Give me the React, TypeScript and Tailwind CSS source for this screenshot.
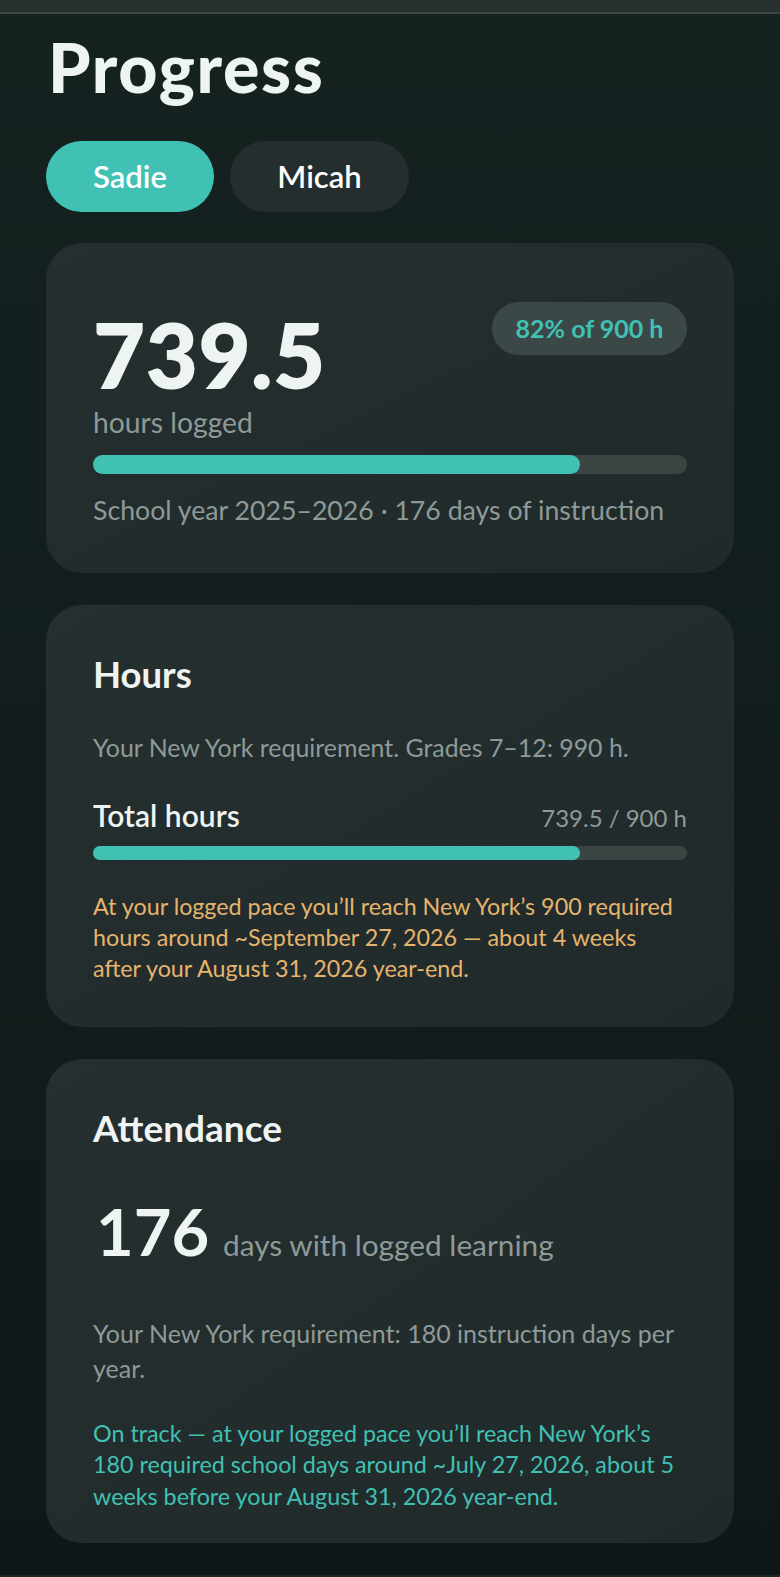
import React from "react";

function Bar({ pct, h }: { pct: number; h: string }) {
  return (
    <div className={`w-full rounded-full bg-[#3a4543] ${h}`}>
      <div className={`rounded-full bg-[#40c1b4] ${h}`} style={{ width: `${pct}%` }} />
    </div>
  );
}

export default function App() {
  return (
    <div
      className="min-h-[1577px] w-full bg-gradient-to-b from-[#152220] to-[#0e1818] text-[#eef4f2]"
      style={{ fontFamily: 'Lato, "Open Sans", sans-serif' }}
    >
      <div className="h-[14px] bg-[#27312f] border-b-2 border-[#3c4845]" />
      <main className="px-[46px]">
        <h1 className="mt-[21px] pl-[2px] text-[68px] leading-[64px] font-black tracking-[1.6px]">Progress</h1>
        <div className="mt-[42px] flex gap-[16px]">
          <button className="flex h-[71px] w-[168px] items-center justify-center rounded-full bg-[#40c1b4] text-[31px] font-semibold text-white">
            Sadie
          </button>
          <button className="flex h-[71px] w-[179px] items-center justify-center rounded-full bg-[#242e2e] text-[31px] font-semibold text-white">
            Micah
          </button>
        </div>

        <section className="mt-[31px] h-[330px] rounded-[36px] bg-gradient-to-br from-[#252f2f] to-[#212a2a] px-[47px] pt-[59px]">
          <div className="flex items-start justify-between">
            <div className="mt-[6px] text-[90px] leading-[92px] font-extrabold tracking-[0.5px]">739.5</div>
            <div className="flex h-[53px] w-[195px] items-center justify-center rounded-full bg-[#3c4847] text-[25px] font-bold text-[#40c1b4]">
              82% of 900 h
            </div>
          </div>
          <div className="mt-[5px] text-[28.3px] leading-[34px] text-[#8e9a98]">hours logged</div>
          <div className="mt-[16px]">
            <Bar pct={82} h="h-[19px]" />
          </div>
          <div className="mt-[19px] whitespace-nowrap text-[26.7px] leading-[34px] text-[#8e9a98]">
            School year 2025–2026 · 176 days of instruction
          </div>
        </section>

        <section className="mt-[32px] h-[422px] rounded-[36px] bg-gradient-to-br from-[#252f2f] to-[#212a2a] px-[47px] pt-[49px]">
          <h2 className="text-[36.5px] leading-[40px] font-bold">Hours</h2>
          <p className="mt-[37px] text-[24.9px] leading-[32px] text-[#8e9a98]">
            Your New York requirement. Grades 7–12: 990 h.
          </p>
          <div className="mt-[34px] flex items-baseline justify-between">
            <span className="text-[30px] leading-[36px] font-semibold">Total hours</span>
            <span className="text-[24px] leading-[36px] text-[#8e9a98]">739.5 / 900 h</span>
          </div>
          <div className="mt-[10px]">
            <Bar pct={82} h="h-[14px]" />
          </div>
          <p className="mt-[31px] text-[23.3px] leading-[31px] text-[#e6b46c]">
            At your logged pace you’ll reach New York’s 900 required hours around ~September 27, 2026 — about 4 weeks after your August 31, 2026 year-end.
          </p>
        </section>

        <section className="mt-[32px] h-[484px] rounded-[36px] bg-gradient-to-br from-[#252f2f] to-[#212a2a] px-[47px] pt-[49px]">
          <h2 className="text-[37px] leading-[40px] font-bold">Attendance</h2>
          <div className="mt-[47px] flex items-baseline gap-[14px] pl-[3px]">
            <span className="text-[65px] leading-[72px] font-bold">176</span>
            <span className="text-[29.8px] leading-[72px] text-[#8e9a98]">days with logged learning</span>
          </div>
          <p className="mt-[35px] text-[25px] leading-[35px] text-[#8e9a98]">
            Your New York requirement: 180 instruction days per year.
          </p>
          <p className="mt-[31.5px] text-[23.3px] leading-[31.5px] text-[#40c1b4]">
            On track — at your logged pace you’ll reach New York’s 180 required school days around ~July 27, 2026, about 5 weeks before your August 31, 2026 year-end.
          </p>
        </section>
      </main>
      <div className="mt-[32px] h-[2px] bg-[#1d2826]" />
    </div>
  );
}
